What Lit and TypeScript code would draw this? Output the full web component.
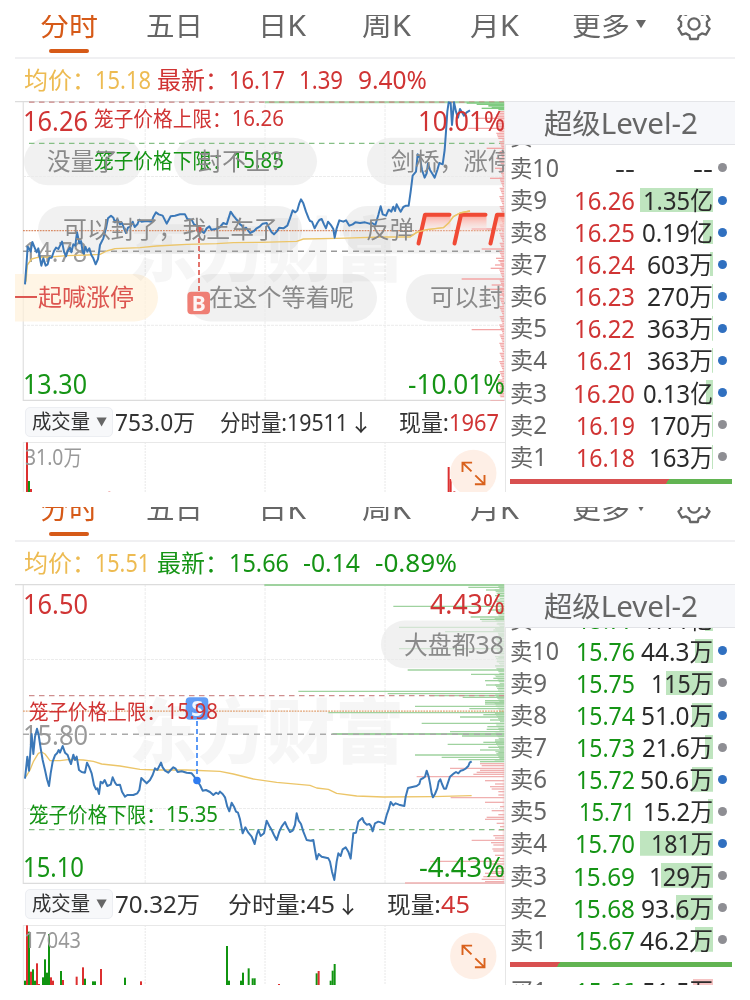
import { LitElement, html, svg, css } from 'lit';
import { customElement, property } from 'lit/decorators.js';

const RED = '#d03434';
const GREEN = '#159415';
const GREY = '#8a8a8a';

/* Latin digits run slightly larger than the Chinese glyphs next to them. */
const runs = (s: string, size: number) =>
  (s.match(/[\u2e80-\uffff\u2193]+|[^\u2e80-\uffff\u2193]+/g) || []).map((r) =>
    /[\u2e80-\uffff\u2193]/.test(r)
      ? svg`<tspan font-size=${(size * 0.96).toFixed(2)}>${r}</tspan>`
      : svg`<tspan font-size=${size}>${r}</tspan>`
  );

const txt = (s: string, x: number, y: number, w: number, size: number, fill: string, weight = 400) =>
  svg`<text x=${x} y=${y} textLength=${w} lengthAdjust="spacingAndGlyphs" fill=${fill} font-weight=${weight}>${runs(s, size)}</text>`;

const label = (s: string, w: number, size: number, fill: string, gap = 0, dy = 0, weight = 400) => html`<svg
  class="label" width=${w} height="32" viewBox="0 0 ${w} 32" style="margin-left:${gap}px"
>${txt(s, 0, 16 + size * 0.357 + dy, w, size, fill, weight)}</svg>`;

type Bar = [number, number, number?];
interface Row { name: string; price: string; qty: string; bar: number; dot: string; pw: number; qw: number; }
interface Panel {
  quote: [string, number, number, string][];
  chartTop: number;
  volTop: number;
  volHeight: number;
  chart: () => unknown;
  volume: () => unknown;
  info: { total: string; tw: number; g1: number; minute: string; mw: number; g2: number; now: string; nw: number };
  rows: Row[];
  next?: Row;
  ratio: number;
}

const r = (name: string, price: string, pw: number, qty: string, qw: number, bar: number, dot: string): Row =>
  ({ name, price, pw, qty, qw, bar, dot });

const line = (pts: string, color: string, w: number) =>
  svg`<polyline points=${pts} fill="none" stroke=${color} stroke-width=${w} stroke-linejoin="round"/>`;

const bars = (list: Bar[], edge: number, color: string) =>
  list.map(([y, x, h]) => svg`<path d="M${x} ${y}H${edge}" stroke=${color} stroke-width=${h || 4}/>`);

const frame = (top: number, g1: number, g2: number, bottom: number) => svg`
  <g stroke="#ececec" stroke-width="1" fill="none">
    <path d="M145.2 ${top}V${bottom}M265 ${top}V${bottom}M385 ${top}V${bottom}" stroke-dasharray="3 1"/>
    <path d="M23 ${g1}H505M23 ${g2}H505" stroke-dasharray="3 1"/>
    <path d="M23.3 ${top}V${bottom}" stroke="#e4e4e4" stroke-width="1.4"/>
    <path d="M15 ${top + 0.5}H505M23 ${bottom - 0.5}H505" stroke="#dcdcdc" stroke-width="1.3"/>
  </g>`;

const hline = (y: number, color: string, dash: string, x = 23, w = 1.2) =>
  svg`<path d="M${x} ${y}H504" stroke=${color} stroke-width=${w} stroke-dasharray=${dash} fill="none"/>`;

const pill = (x: number, y: number, w: number, fill = '#ebebeb') =>
  svg`<rect x=${x} y=${y} width=${w} height="47.6" rx="23.8" fill=${fill} opacity=".68"/>`;

const watermark = (y: number) =>
  svg`<text x="129" y=${y} font-size="70" font-weight="900" textLength="275" lengthAdjust="spacingAndGlyphs" fill="#f4f4f4" opacity=".8">东方财富</text>`;

const LINE_A1 = '75,568 80,500 83,455 88,462 92,470 97,441 104,458 110,472 115,460 120,490 124,512 130,490 137,512 143,508 148,488 155,488 162,468 168,458 175,462 180,452 186,440 192,470 198,484 203,468 210,458 214,472 220,448 226,452 231,412 238,445 243,438 248,470 252,476 256,455 262,470 268,460 274,480 280,490 287,508 294,492 300,450 310,430 318,400 324,370 333,362 340,368 345,382 352,372 360,388 366,384 372,400 378,414 384,398 392,394 398,380 404,396 412,388 418,374 424,380 440,378 455,380 460,366 468,352 476,358 488,362 500,386 512,364 525,362 540,358 555,358 562,372 575,374 582,388 590,392 597,398 604,408 612,414 620,400 628,394 634,404 648,402 660,396 670,384 680,388 692,350 700,362 708,372 714,378 720,388 726,392 730,402 738,398 750,414 762,408 770,400 780,394 788,386 800,384 808,400 815,412 822,418 830,410 838,398 850,400 862,392 870,370 878,346 886,352 892,346 898,325 903,313 910,325 918,350 926,370 930,378 936,380 944,400 952,384 958,375 965,372 972,388 978,400 984,380 994,392 1000,402 1004,428 1010,400 1018,376 1030,380 1038,376 1048,392 1058,388 1066,382 1080,384 1095,382 1108,386 1116,384 1126,390 1135,360 1142,334 1148,358 1158,362 1166,344 1174,350 1180,335 1185,348 1190,328 1196,340 1202,350 1210,336 1218,332 1226,332 1232,290 1238,242 1248,230 1253,178 1260,190 1266,225 1274,248 1280,235 1284,205 1290,225 1298,238 1304,248 1312,225 1318,204 1328,208 1334,165 1338,110 1342,50 1346,22 1352,24 1356,90 1362,22 1368,50 1374,68 1380,42 1386,52 1392,62 1400,52 1410,46';
const AVG_A = '78,560 82,510 95,492 110,488 150,486 200,482 260,480 300,478 320,468 345,461 420,458 470,453 560,448 650,446 700,443 780,442 890,439 910,432 1010,430 1150,426 1230,426 1250,412 1280,404 1330,398 1345,385 1360,365 1380,354 1410,348';

const LINE_B = '75,596 82,530 87,572 95,462 100,522 105,470 111,446 116,465 122,505 128,540 135,570 141,598 147,618 152,580 158,545 165,526 171,520 176,510 180,518 188,498 195,518 203,525 208,540 213,552 220,524 225,540 230,530 237,570 245,576 255,578 261,548 268,562 275,580 282,615 288,628 292,625 297,642 302,605 308,610 314,600 322,618 332,614 338,592 345,608 350,615 360,614 366,635 375,650 382,645 400,645 412,640 418,630 424,594 430,600 440,610 450,600 458,585 465,565 472,570 483,548 488,562 495,572 505,578 512,570 520,562 527,566 533,576 545,574 560,578 575,580 583,590 590,602 600,615 608,632 618,630 630,636 640,645 648,638 655,642 660,635 668,642 675,652 682,680 688,694 695,668 702,680 708,695 714,698 720,718 728,760 736,742 745,758 755,770 764,792 770,765 775,750 782,768 792,760 800,722 808,738 815,750 822,765 830,780 838,755 845,740 855,726 862,742 870,756 878,752 885,735 890,700 896,722 903,732 910,755 920,780 932,782 940,780 945,810 950,838 956,822 965,830 985,835 990,845 996,875 1003,900 1010,845 1015,820 1022,828 1028,808 1037,802 1045,815 1052,836 1060,760 1068,758 1075,725 1080,720 1087,714 1092,726 1100,734 1108,732 1113,738 1118,754 1125,730 1135,725 1145,728 1153,732 1160,705 1167,685 1172,666 1180,676 1187,670 1197,674 1213,678 1217,650 1224,624 1240,620 1250,618 1258,612 1262,598 1270,594 1275,590 1280,572 1286,590 1290,610 1295,640 1299,652 1305,642 1312,625 1316,605 1321,598 1326,612 1332,626 1338,626 1344,608 1350,590 1356,585 1362,580 1368,576 1375,580 1382,572 1390,570 1398,565 1405,558 1409,548 1415,544';
const AVG_B = '78,590 90,570 100,545 115,520 125,516 135,522 150,542 180,542 210,538 250,540 280,544 305,552 360,558 420,568 470,570 560,570 660,574 700,582 760,597 830,607 930,616 950,624 985,628 1010,640 1070,648 1150,651 1300,650 1415,647';

const BOOK_A_GREEN: Bar[] = [[24, 650], [28, 680], [32, 715, 6], [37, 725], [40, 695], [44, 745]];
const BOOK_A_RED: Bar[] = [[70, 675], [100, 655], [160, 710], [175, 745], [190, 738], [220, 735], [250, 720], [402, 665], [462, 695], [490, 738], [497, 745], [510, 735], [520, 722], [552, 635], [570, 725], [583, 710], [600, 745], [704, 665], [918, 721]];
for (let y = 50; y < 910; y += 5) {
  const dense = y < 135 ? 14 : y > 850 ? 10 : 4;
  BOOK_A_RED.push([y, 762 - dense - ((y * 37) % 11), 3.6]);
}
const BOOK_B_GREEN: Bar[] = [[15, 43, 6], [22, 655], [30, 708], [40, 745], [47, 735], [79, 430], [90, 715], [100, 740], [111, 662], [118, 690], [124, 695], [132, 740], [142, 447], [150, 730], [155, 585], [165, 745], [175, 740], [185, 745], [195, 738], [206, 447], [220, 745], [232, 745], [245, 740], [257, 735], [270, 473], [283, 663], [295, 730], [302, 705], [315, 708], [325, 745], [334, 145], [341, 413], [347, 540], [352, 638], [362, 705], [367, 705], [372, 705], [379, 495], [386, 658], [398, 235], [404, 700], [411, 630], [420, 720], [430, 515], [440, 712], [448, 710], [455, 600], [462, 247, 6], [468, 636], [480, 735], [487, 700], [493, 593], [502, 715], [510, 690], [518, 745], [525, 495], [532, 575], [539, 625], [545, 690]];
const BOOK_B_RED: Bar[] = [[551, 690], [557, 695], [565, 600], [571, 690], [577, 680], [583, 670], [590, 500], [602, 705], [612, 735], [620, 720], [627, 725], [635, 745], [645, 745], [653, 602], [667, 705], [680, 750], [692, 725], [704, 745], [712, 710], [718, 705], [730, 740], [740, 750], [750, 745], [767, 730], [774, 735], [781, 665], [788, 723], [795, 730], [807, 727], [813, 730], [826, 735], [836, 750], [844, 540], [852, 725], [865, 735], [875, 720], [880, 705], [890, 700], [898, 695], [905, 705], [909, 465, 5]];
for (let y = 20; y < 545; y += 5) BOOK_B_GREEN.push([y, 750 - ((y * 13) % 17), 3]);
for (let y = 552; y < 905; y += 6) BOOK_B_RED.push([y, 758 - ((y * 13) % 13), 2]);

const flag = (x: number) => svg`
  <path d="M${x + 6} 216H${x + 32}V235H${x + 1}Z" fill="url(#flagFade)"/>
  <path d="M${x + 31} 214.8H${x + 6.5}L${x} 243.5" fill="none" stroke="#f04a35" stroke-width="4" stroke-linecap="round" stroke-linejoin="round"/>`;

const marker = (x: number, y: number, ch: string, fill: string) => svg`
  <rect x=${x - 11.3} y=${y - 11.3} width="22.6" height="22.6" rx="4" fill=${fill} opacity=".88"/>
  <text x=${x} y=${y + 7.6} text-anchor="middle" font-size="21" font-weight="700" fill="#fff" opacity=".92">${ch}</text>`;

const chartA = () => svg`
  <defs><linearGradient id="flagFade" x1="0" y1="0" x2="0" y2="1">
    <stop offset="0" stop-color="#ff9d90" stop-opacity=".85"/><stop offset="1" stop-color="#fff" stop-opacity=".1"/>
  </linearGradient></defs>
  ${frame(101, 176.5, 325.3, 401)}
  ${pill(24, 137.7, 118)}${pill(174, 137.7, 143)}${pill(367, 137.7, 180)}
  ${pill(38, 206, 264)}${pill(343, 206, 220)}
  ${pill(-40, 274, 198, '#fff0d8')}${pill(187, 274, 190)}${pill(406, 274, 160)}
  <g style="mix-blend-mode:multiply">${watermark(276)}</g>
  <path d="M265 102.2H504" stroke="#a5d6a5" stroke-width="2"/>
  ${hline(102.1, '#c98686', '5.5 4.5', 29)}
  ${hline(143.4, '#86bf86', '5.5 4.5', 29)}
  ${hline(230.6, '#d98c66', '1.8 1')}
  ${hline(251.2, '#999', '6 5', 23, 1.4)}
  <g transform="translate(250 95) scale(.33333)">
    ${bars(BOOK_A_RED, 763, '#f3a5a5')}${bars(BOOK_A_GREEN, 763, '#7fcb80')}
  </g>
  ${txt('14.78', 23, 262, 64, 28, '#999')}
  <g transform="translate(0 95) scale(.33333)">${line(AVG_A, '#ecc568', 4)}${line(LINE_A1, '#3b78b8', 6)}</g>
  ${txt('16.26', 23, 130.7, 65, 28, RED)}
  ${txt('笼子价格上限：16.26', 94, 126.3, 190, 21.8, RED)}
  ${txt('10.01%', 418, 130.7, 87, 28, RED)}
  ${txt('13.30', 23, 394, 64, 28, GREEN)}
  ${txt('-10.01%', 408, 394, 97, 28, GREEN)}
  <path d="M199 230V292" stroke="#e0665e" stroke-width="1.8" stroke-dasharray="5 3"/>
  <circle cx="199" cy="229.5" r="3" fill="#e0554c"/>
  ${txt('笼子价格下限：15.85', 94, 167.8, 190, 21.8, GREEN)}
  ${txt('没量了', 47, 169.5, 71, 25, GREY)}
  ${txt('封不上？', 198, 169.5, 96, 25, GREY)}
  ${txt('剑桥，涨停', 391, 169.5, 121, 25, GREY)}
  ${txt('可以封了，我上车了', 63, 238, 215, 25, GREY)}
  ${txt('反弹', 366, 238, 48, 25, GREY)}
  ${txt('一起喊涨停', 14, 306, 120, 25, '#dc5550')}
  ${marker(198.7, 303, 'B', '#ee6d62')}
  ${txt('在这个等着呢', 209, 306, 145, 25, GREY)}
  ${txt('可以封单', 430, 306, 97, 25, GREY)}
  ${flag(418.5)}${flag(454.5)}${flag(490.5)}
  <g transform="translate(0 95) scale(.33333)">${line('1230,426 1250,412 1280,404 1330,398 1345,385 1360,365 1380,354 1410,348', '#ecc568', 4)}</g>
  <path d="M505 101V401" stroke="#e6e6e6" stroke-width="1"/>`;

const chartB = () => svg`
  ${frame(584, 659.5, 808.5, 884)}
  ${watermark(758)}
  <g transform="translate(250 580) scale(.33333)">
    ${bars(BOOK_B_GREEN, 763, '#9fd29f')}${bars(BOOK_B_RED, 763, '#f0b0b0')}
  </g>
  ${hline(695.7, '#cf8f8f', '5.5 4.5', 29)}
  ${hline(711.2, '#e0a070', '1.8 1')}
  ${hline(734.2, '#aaa', '6 5', 23, 1.4)}
  ${hline(829.7, '#86bf86', '5.5 4.5', 29)}
  ${txt('16.50', 23, 613.6, 65, 28, RED)}
  ${txt('4.43%', 430, 613.6, 75, 28, RED)}
  ${txt('15.80', 23, 744.6, 65, 28, '#999')}
  ${txt('15.10', 23, 877, 61, 28, GREEN)}
  ${txt('-4.43%', 419, 877, 86, 28, GREEN)}
  <g transform="translate(0 580) scale(.33333)">${line(AVG_B, '#ecc568', 4)}${line(LINE_B, '#3b78b8', 6)}</g>
  ${marker(197, 708.5, 'S', '#4b8ff5')}
  <path d="M197 721V780" stroke="#4b8ff5" stroke-width="1.8" stroke-dasharray="5 3"/>
  <circle cx="197" cy="780.5" r="3.8" fill="#2f7cf0"/>
  ${txt('笼子价格上限：15.98', 29, 719, 189, 21.8, RED)}
  ${txt('笼子价格下限：15.35', 29, 821.6, 189, 21.8, GREEN)}
  ${pill(381, 620.6, 190)}
  ${txt('大盘都38', 404, 653.5, 100, 26, GREY)}
  <path d="M505 584V884" stroke="#e6e6e6" stroke-width="1"/>`;

const volGrid = (top: number, bottom: number) => svg`
  <g stroke="#e8e8e8" fill="none"><path d="M145.2 ${top}V${bottom}M265 ${top}V${bottom}M385 ${top}V${bottom}" stroke-dasharray="2 1"/>
  <path d="M23.3 ${top}V${bottom}M23 ${top + 0.5}H505"/></g>`;

const columns = (list: [number, number, number][], base: number) =>
  list.map(([x, y, up]) => svg`<path d="M${x} ${y}V${base}" stroke=${up ? '#dc3030' : '#109410'} stroke-width="6"/>`);

const expand = (y: number) => svg`
  <circle cx="473.3" cy=${y} r="23.2" fill="#feefe6"/>
  <g transform="translate(473.3 ${y})" fill="none" stroke="#d9611c" stroke-width="1.9">
    <path d="M-10.8 -1V-10.4H-1.2M-10.4 -10L-1.8 -1.6M11.2 2V11.3H1.6M10.8 10.9L2 2.4"/>
  </g>`;

const volumeA = () => svg`
  ${volGrid(442, 492)}
  <g transform="translate(0 330) scale(.33333)">
    ${columns([[81, 337, 1], [87, 453, 0], [93, 477, 1], [328, 485, 1], [1346, 411, 1], [1352, 447, 1], [1363, 484, 1]], 487)}
  </g>
  ${txt('31.0万', 25, 464.5, 57, 22.5, '#999')}
  ${expand(473)}`;

const volumeB = () => svg`
  ${volGrid(925, 985)}
  <g transform="translate(0 790) scale(.33333)">
    ${columns([[75, 572, 0], [81, 406, 1], [87, 425, 0], [93, 545, 1], [99, 538, 0], [105, 572, 0], [111, 520, 1], [117, 582, 1], [129, 562, 0], [135, 508, 0], [141, 548, 0], [147, 432, 0], [153, 562, 1], [159, 572, 1], [183, 543, 0], [189, 570, 1], [230, 560, 1], [249, 532, 1], [255, 566, 0], [279, 574, 0], [285, 574, 0], [303, 537, 1], [375, 563, 0], [423, 574, 1], [681, 468, 0], [687, 572, 0], [723, 572, 0], [729, 548, 0], [746, 535, 0], [758, 565, 0], [764, 565, 0], [837, 582, 1], [950, 550, 0], [956, 543, 1], [992, 572, 0], [998, 542, 0], [1004, 522, 0]], 585)}
  </g>
  ${txt('17043', 24, 947.5, 57, 22.5, '#999')}
  ${expand(956)}`;

const BLUE = '#3070c0';
const DOT = '#8e8e93';

const first: Panel = {
  quote: [['均价：', 8.5, 72, '#edbb52'], ['15.18', -0.5, 56, '#edbb52'], ['最新：', 6, 72, RED], ['16.17', 0, 56, RED], ['1.39', 14, 44, RED], ['9.40%', 14.5, 69, RED]],
  chartTop: 101, volTop: 442, volHeight: 50, chart: chartA, volume: volumeA,
  info: { total: '753.0万', tw: 80, g1: 26, minute: '分时量:19511', mw: 128, g2: 30, now: '1967', nw: 50 },
  rows: [
    r('卖11', '--', 20, '--', 20, 0, DOT),
    r('卖10', '--', 20, '--', 20, 0, DOT),
    r('卖9', '16.26', 61, '1.35亿', 70, 73, BLUE),
    r('卖8', '16.25', 61, '0.19亿', 71, 10, BLUE),
    r('卖7', '16.24', 61, '603万', 66, 3, BLUE),
    r('卖6', '16.23', 61, '270万', 66, 1, BLUE),
    r('卖5', '16.22', 61, '363万', 66, 1.5, BLUE),
    r('卖4', '16.21', 59, '363万', 66, 1.5, BLUE),
    r('卖3', '16.20', 62, '0.13亿', 70, 7, BLUE),
    r('卖2', '16.19', 59, '170万', 64, 1, DOT),
    r('卖1', '16.18', 59, '163万', 64, 1, DOT),
  ],
  ratio: 70.6,
};

const second: Panel = {
  quote: [['均价：', 8.5, 72, '#edbb52'], ['15.51', -0.5, 55, '#edbb52'], ['最新：', 7, 72, GREEN], ['15.66', 0, 60, GREEN], ['-0.14', 14, 57, GREEN], ['-0.89%', 14.5, 82, GREEN]],
  chartTop: 584, volTop: 925, volHeight: 60, chart: chartB, volume: volumeB,
  info: { total: '70.32万', tw: 85, g1: 29, minute: '分时量:45', mw: 107, g2: 31, now: '45', nw: 29 },
  rows: [
    r('卖11', '15.77', 58, '1.11亿', 71, 8, DOT),
    r('卖10', '15.76', 59, '44.3万', 72, 18, BLUE),
    r('卖9', '15.75', 59, '115万', 62, 47, DOT),
    r('卖8', '15.74', 59, '51.0万', 72, 21, BLUE),
    r('卖7', '15.73', 59, '21.6万', 71, 8, DOT),
    r('卖6', '15.72', 59, '50.6万', 73, 21, BLUE),
    r('卖5', '15.71', 56, '15.2万', 70, 5, DOT),
    r('卖4', '15.70', 60, '181万', 62, 73, BLUE),
    r('卖3', '15.69', 62, '129万', 64, 52, DOT),
    r('卖2', '15.68', 62, '93.6万', 72, 37, DOT),
    r('卖1', '15.67', 60, '46.2万', 73, 18, DOT),
  ],
  next: r('买1', '15.66', 60, '51.5万', 71, 20, 'none'),
  ratio: 22.2,
};

@customElement('stock-panel')
class StockPanel extends LitElement {
  @property({ attribute: false }) data!: Panel;

  static styles = css`
    :host { display: flex; flex-direction: column; overflow: hidden; width: 720px; background: #fff;
      font-family: 'Noto Sans', 'Noto Sans CJK SC', sans-serif; }
    svg { display: block; flex: none; }
    .label { overflow: visible; }
    .nav { height: 44px; flex: none; display: flex; align-items: flex-end; overflow: hidden; border-bottom: 2px solid #f0f0f2; box-sizing: border-box; }
    :host(.short) .nav { height: 34.6px; }
    .tabs { display: flex; align-items: flex-start; height: 48px; flex: none; }
    .tab { display: flex; flex-direction: column; align-items: center; gap: 8px; }
    .ink { width: 40px; height: 4px; border-radius: 2px; background: #d65a18; }
    .quote { height: 42px; flex: none; display: flex; align-items: center; }
    :host(.short) .quote { height: 42.4px; }
    .body { display: grid; grid-template-columns: 490px 230px; flex: 1; min-height: 0; }
    .left, .right { display: flex; flex-direction: column; min-width: 0; }
    .right { box-shadow: inset 1px 0 #e6e6e6; }
    .info { height: 41px; flex: none; display: flex; align-items: center; }
    .select { margin-left: 10px; width: 88px; height: 30px; box-sizing: border-box; border: 1px solid #eceef2; border-radius: 5px; background: #f7f8fa;
      display: flex; align-items: center; flex: none; }
    .title { height: 44px; flex: none; box-sizing: border-box; display: flex; align-items: center; background: #f6f7fa;
      border-top: 1px solid #e4e5e8; border-bottom: 1.5px solid #e2e3e7; }
    .list { height: 334.4px; flex: none; box-sizing: border-box; overflow: hidden; padding-bottom: 6.6px; display: flex; flex-direction: column; justify-content: flex-end; }
    .row { display: grid; grid-template-columns: 50px 74.5px 78.5px 19px; height: 32.1px; align-items: center; flex: none; padding-left: 5px; }
    .price { display: flex; justify-content: flex-end; }
    .qty { height: 24.5px; display: flex; justify-content: flex-end; align-items: center; }
    .dot { width: 9px; height: 9px; border-radius: 50%; justify-self: center; }
    .ratio { height: 4.4px; flex: none; margin-left: 5px; width: 222px; }
    .next { padding-top: 8px; }
  `;

  private row(d: Row, up: boolean) {
    const color = d.price === '--' ? '#333' : up ? RED : GREEN;
    const tint = d.name[0] === '买' ? '#f5c3c3' : '#bfe5bf';
    return html`<div class="row">
      ${label(d.name, d.name.length > 2 ? 49 : 37, 25, '#666', 0, 0.5)}
      <div class="price">${label(d.price, d.pw, 25.5, color, 0, 1)}</div>
      <div class="qty" style="background:linear-gradient(${tint},${tint}) right / ${d.bar}px 100% no-repeat">${label(d.qty, d.qw, 25.5, '#2b2b2b', 0, 1)}</div>
      <i class="dot" style="background:${d.dot}"></i>
    </div>`;
  }

  render() {
    const d = this.data;
    const up = d.ratio > 50;
    const tabs: [string, number, number, string][] = [
      ['分时', 24.5, 58, '#d65a18'], ['五日', 48.5, 57, '#666'], ['日K', 55, 48, '#666'],
      ['周K', 56, 49, '#666'], ['月K', 58.5, 49, '#666'], ['更多', 53, 58, '#666'],
    ];
    return html`
      <div class="nav"><div class="tabs">
        ${tabs.map(([s, gap, w, c], i) => html`<div class="tab" style="margin-left:${gap}px">
          ${label(s, w, 29, c, 0, 0.3)}${i === 0 ? html`<div class="ink"></div>` : ''}</div>`)}
        <svg width="12" height="32" viewBox="0 0 12 32" style="margin-left:5px"><path d="M1 11H11L6 19.2Z" fill="#666"/></svg>
        <svg width="36" height="36" viewBox="-18 -18 36 36" style="margin-left:29.5px;margin-top:-3px">
          <g fill="none" stroke="#666" stroke-width="2.3" stroke-linejoin="round">
            <path d="M-3.8 -15H3.8L4.6 -11.3Q6.4 -10.5 8 -9.2L12 -10.6L15.6 -4.5L12.8 -2Q13.2 0 12.8 2L15.6 4.5L12 10.6L8 9.4Q6.4 10.7 4.6 11.4L3.8 15H-3.8L-4.6 11.4Q-6.4 10.7 -8 9.4L-12 10.6L-15.6 4.5L-12.8 2Q-13.2 0 -12.8 -2L-15.6 -4.5L-12 -10.6L-8 -9.2Q-6.4 -10.5 -4.6 -11.3Z"/>
            <circle r="5.6"/>
          </g></svg>
      </div></div>
      <div class="quote">${d.quote.map(([s, gap, w, c]) => label(s, w, s.length === 3 ? 24.3 : 25.5, c, gap, 0))}</div>
      <div class="body">
        <div class="left">
          <svg width="490" height="300" viewBox="15 ${d.chartTop} 490 300">${d.chart()}</svg>
          <div class="info">
            <div class="select">${label('成交量', 58, 20.8, '#333', 6, 0)}
              <svg width="12" height="12" viewBox="0 0 12 12" style="margin-left:6px"><path d="M0.5 1.6H10.7L5.6 10.4Z" fill="#666"/></svg></div>
            ${label(d.info.total, d.info.tw, 24, '#333', 1.5, 0)}
            ${label(d.info.minute, d.info.mw, 24, '#333', d.info.g1 - 1, 0)}
            ${label('↓', 24, 24, '#333', 1, 0)}
            ${label('现量:', up ? 50 : 54, 24, '#333', d.info.g2 - 4, 0)}
            ${label(d.info.now, d.info.nw, 24, RED, 0, 0)}
          </div>
          <svg width="490" height=${d.volHeight} viewBox="15 ${d.volTop} 490 ${d.volHeight}">${d.volume()}</svg>
        </div>
        <div class="right">
          <div class="title">${label('超级Level-2', 154, 29.5, '#666', 39, 0.5)}</div>
          <div class="list">${d.rows.map((x) => this.row(x, up))}</div>
          <div class="ratio" style="background:linear-gradient(125deg,#d85050 ${d.ratio}%,#62b452 ${d.ratio}%)"></div>
          ${d.next ? html`<div class="next">${this.row(d.next, up)}</div>` : ''}
        </div>
      </div>`;
  }
}

@customElement('app-root')
class AppRoot extends LitElement {
  static styles = css`
    :host { display: flex; flex-direction: column; gap: 15px; box-sizing: border-box; width: 750px; height: 1000px; padding: 15px; background: #fff; overflow: hidden; }
    .a { height: 477px; flex: none; }
    .b { height: 478px; flex: none; }
  `;
  render() {
    return html`<stock-panel class="a" .data=${first}></stock-panel><stock-panel class="b short" .data=${second}></stock-panel>`;
  }
}
